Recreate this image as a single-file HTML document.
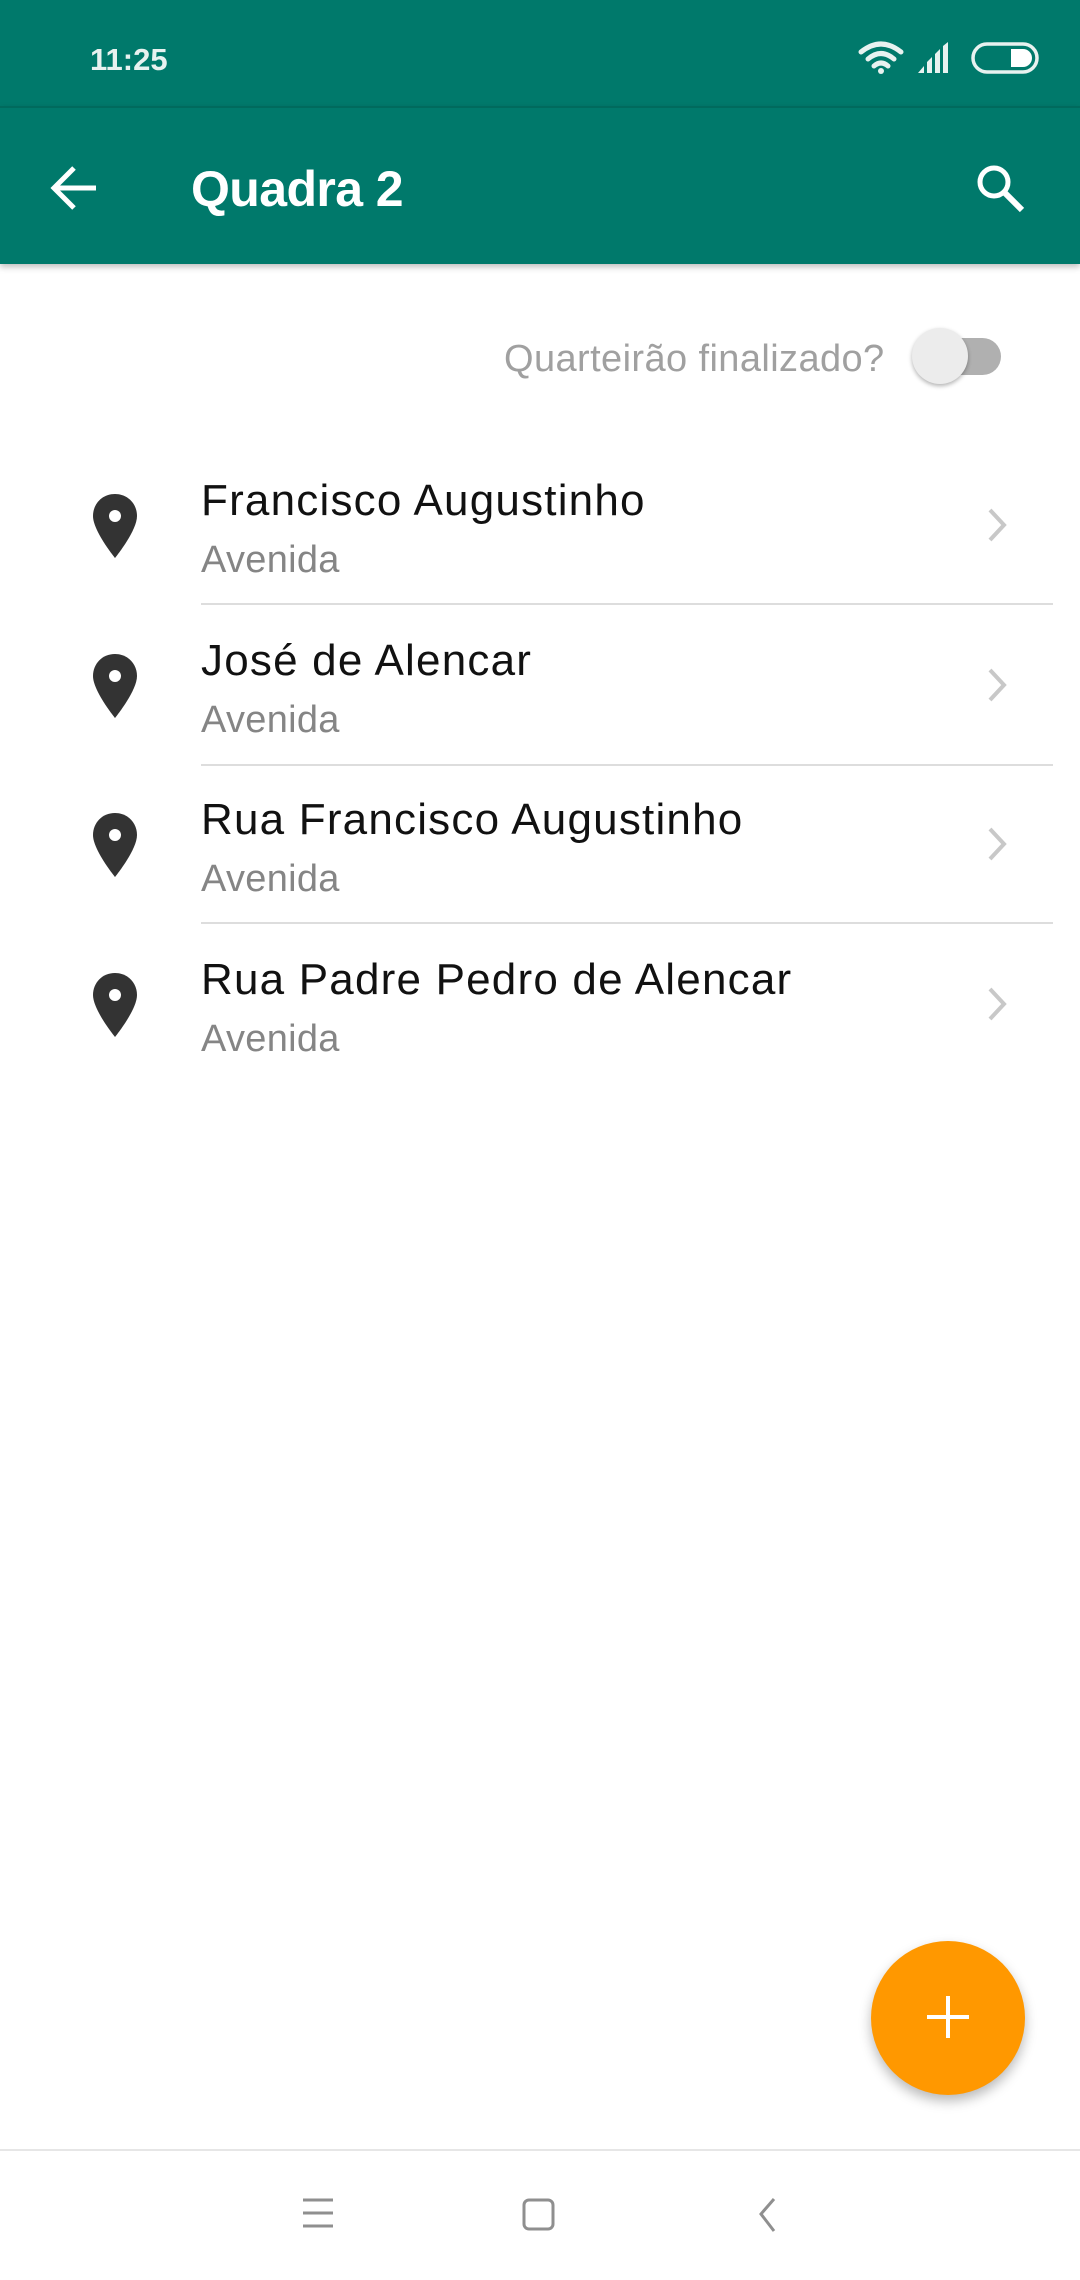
<!DOCTYPE html>
<html><head><meta charset="utf-8"><style>
*{margin:0;padding:0;box-sizing:border-box}
body{width:1080px;height:2280px;position:relative;background:#fff;font-family:"Liberation Sans",sans-serif;overflow:hidden}
.abs{position:absolute}
.status{left:0;top:0;width:1080px;height:108px;background:#00796b}
.bar{left:0;top:106px;width:1080px;height:158px;background:#00796b;box-shadow:0 3px 6px rgba(0,0,0,.25);border-top:2px solid #006a5d}
.t{font-size:44px;color:#111;white-space:nowrap;letter-spacing:1.2px}
.s{font-size:38px;color:#858585;white-space:nowrap;letter-spacing:0.3px}
.div{left:201px;width:852px;height:2px;background:#ddd}
</style></head><body>
<div class="abs status"></div>
<div class="abs" style="left:90px;top:42px;font-size:31px;font-weight:bold;color:#e8f2f0">11:25</div>
<svg class="abs" style="left:858px;top:40px" width="46" height="34" viewBox="0 0 46 34"><path d="M3 12 Q23 -4 43 12" stroke="#e8f2f0" stroke-width="5" fill="none" stroke-linecap="round"/><path d="M10 19 Q23 8 36 19" stroke="#e8f2f0" stroke-width="5" fill="none" stroke-linecap="round"/><path d="M16 26 Q23 20 30 26" stroke="#e8f2f0" stroke-width="5" fill="none" stroke-linecap="round"/><circle cx="23" cy="31" r="3" fill="#e8f2f0"/></svg>
<svg class="abs" style="left:918px;top:42px" width="34" height="31" viewBox="0 0 34 31"><path d="M0 31 L6 24 V31Z M9 20 L14 15 V31 H9Z M17 12 L22 7 V31 H17Z M25 4 L30 0 V31 H25Z" fill="#e8f2f0"/></svg>
<svg class="abs" style="left:971px;top:42px" width="68" height="32" viewBox="0 0 68 32"><rect x="2" y="2" width="64" height="28" rx="14" stroke="#e8f2f0" stroke-width="3.5" fill="none"/><path d="M40 7 H52 A9 9 0 0 1 52 25 H40Z" fill="#fff"/></svg>
<div class="abs bar"></div>
<svg class="abs" style="left:50px;top:164px" width="50" height="48" viewBox="0 0 50 48"><path d="M46 24 H6 M24 4 L4 24 L24 44" stroke="#fff" stroke-width="5" fill="none"/></svg>
<div class="abs" style="left:191px;top:160px;font-size:50px;font-weight:bold;color:#fff;letter-spacing:-0.6px">Quadra 2</div>
<svg class="abs" style="left:974px;top:162px" width="54" height="52" viewBox="0 0 54 52"><circle cx="20" cy="20" r="14" stroke="#fff" stroke-width="5" fill="none"/><path d="M30 30 L48 48" stroke="#fff" stroke-width="6"/></svg>
<div class="abs" style="left:504px;top:338px;font-size:38px;color:#a0a0a0;letter-spacing:0.4px">Quarteirão finalizado?</div>
<div class="abs" style="left:925px;top:338px;width:76px;height:37px;border-radius:19px;background:#b0b0b0"></div>
<div class="abs" style="left:912px;top:328px;width:56px;height:56px;border-radius:50%;background:#ececec;box-shadow:0 2px 4px rgba(0,0,0,.3)"></div>

<div class="abs" style="left:0;top:444px;width:1080px">
 <svg class="abs" style="left:91px;top:49px" width="48" height="66" viewBox="0 0 48 66"><path d="M24 1 C11 1 2 11 2 23 C2 38 24 65 24 65 C24 65 46 38 46 23 C46 11 37 1 24 1Z" fill="#333"/><circle cx="24" cy="23" r="6" fill="#fff"/></svg>
 <div class="abs t" style="left:201px;top:32px">Francisco Augustinho</div>
 <div class="abs s" style="left:201px;top:95px">Avenida</div>
 <svg class="abs" style="left:986px;top:64px" width="24" height="34" viewBox="0 0 24 34"><path d="M4 2 L18 17 L4 32" stroke="#c8c8c8" stroke-width="4" fill="none"/></svg>
</div>
<div class="abs div" style="top:603px"></div>
<div class="abs" style="left:0;top:604px;width:1080px">
 <svg class="abs" style="left:91px;top:49px" width="48" height="66" viewBox="0 0 48 66"><path d="M24 1 C11 1 2 11 2 23 C2 38 24 65 24 65 C24 65 46 38 46 23 C46 11 37 1 24 1Z" fill="#333"/><circle cx="24" cy="23" r="6" fill="#fff"/></svg>
 <div class="abs t" style="left:201px;top:32px">José de Alencar</div>
 <div class="abs s" style="left:201px;top:95px">Avenida</div>
 <svg class="abs" style="left:986px;top:64px" width="24" height="34" viewBox="0 0 24 34"><path d="M4 2 L18 17 L4 32" stroke="#c8c8c8" stroke-width="4" fill="none"/></svg>
</div>
<div class="abs div" style="top:764px"></div>
<div class="abs" style="left:0;top:763px;width:1080px">
 <svg class="abs" style="left:91px;top:49px" width="48" height="66" viewBox="0 0 48 66"><path d="M24 1 C11 1 2 11 2 23 C2 38 24 65 24 65 C24 65 46 38 46 23 C46 11 37 1 24 1Z" fill="#333"/><circle cx="24" cy="23" r="6" fill="#fff"/></svg>
 <div class="abs t" style="left:201px;top:32px">Rua Francisco Augustinho</div>
 <div class="abs s" style="left:201px;top:95px">Avenida</div>
 <svg class="abs" style="left:986px;top:64px" width="24" height="34" viewBox="0 0 24 34"><path d="M4 2 L18 17 L4 32" stroke="#c8c8c8" stroke-width="4" fill="none"/></svg>
</div>
<div class="abs div" style="top:922px"></div>
<div class="abs" style="left:0;top:923px;width:1080px">
 <svg class="abs" style="left:91px;top:49px" width="48" height="66" viewBox="0 0 48 66"><path d="M24 1 C11 1 2 11 2 23 C2 38 24 65 24 65 C24 65 46 38 46 23 C46 11 37 1 24 1Z" fill="#333"/><circle cx="24" cy="23" r="6" fill="#fff"/></svg>
 <div class="abs t" style="left:201px;top:32px">Rua Padre Pedro de Alencar</div>
 <div class="abs s" style="left:201px;top:95px">Avenida</div>
 <svg class="abs" style="left:986px;top:64px" width="24" height="34" viewBox="0 0 24 34"><path d="M4 2 L18 17 L4 32" stroke="#c8c8c8" stroke-width="4" fill="none"/></svg>
</div>

<div class="abs" style="left:871px;top:1941px;width:154px;height:154px;border-radius:50%;background:#ff9800;box-shadow:0 6px 12px rgba(0,0,0,.28)"></div>
<svg class="abs" style="left:927px;top:1996px" width="42" height="42" viewBox="0 0 42 42"><path d="M21 0 V42 M0 21 H42" stroke="#fff" stroke-width="4"/></svg>

<div class="abs" style="left:0;top:2149px;width:1080px;height:2px;background:#e6e6e6"></div>
<svg class="abs" style="left:302px;top:2198px" width="32" height="32" viewBox="0 0 32 32"><path d="M1 2 H31 M1 15 H31 M1 28 H31" stroke="#8f8f8f" stroke-width="3"/></svg>
<svg class="abs" style="left:522px;top:2198px" width="34" height="34" viewBox="0 0 34 34"><rect x="2" y="2" width="29" height="29" rx="5" stroke="#8f8f8f" stroke-width="3" fill="none"/></svg>
<svg class="abs" style="left:756px;top:2198px" width="22" height="34" viewBox="0 0 22 34"><path d="M18 1 L5 16 L18 33" stroke="#8f8f8f" stroke-width="3" fill="none"/></svg>
</body></html>
